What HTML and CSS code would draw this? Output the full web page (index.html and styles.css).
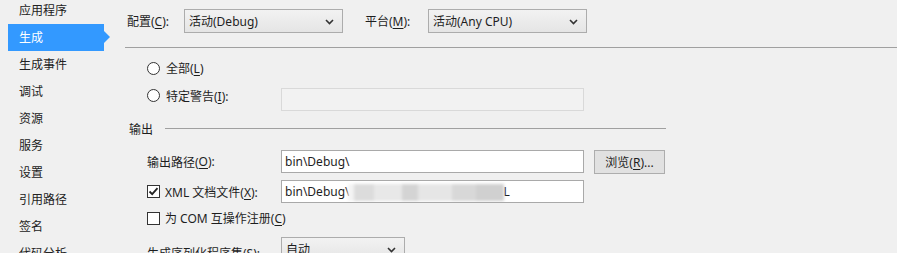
FILE: index.html
```html
<!DOCTYPE html>
<html lang="zh-CN">
<head>
    <meta charset="UTF-8">
    <title>项目属性 - 生成</title>
    <link rel="stylesheet" href="styles.css">
</head>
<body>
    <div class="page">
        <ul class="nav">
            <li>应用程序</li>
            <li class="active">生成</li>
            <li>生成事件</li>
            <li>调试</li>
            <li>资源</li>
            <li>服务</li>
            <li>设置</li>
            <li>引用路径</li>
            <li>签名</li>
            <li>代码分析</li>
        </ul>

        <div class="main">
            <div class="toolbar">
                <span class="tb-label">配置(<u>C</u>):</span>
                <div class="select select-wide">
                    <span>活动(Debug)</span>
                    <svg class="chev" width="9" height="6" viewBox="0 0 9 6"><path d="M1 1 L4.5 4.5 L8 1" fill="none" stroke="#333" stroke-width="1.6"/></svg>
                </div>
                <span class="tb-label tb-gap">平台(<u>M</u>):</span>
                <div class="select select-wide">
                    <span>活动(Any CPU)</span>
                    <svg class="chev" width="9" height="6" viewBox="0 0 9 6"><path d="M1 1 L4.5 4.5 L8 1" fill="none" stroke="#333" stroke-width="1.6"/></svg>
                </div>
            </div>
            <div class="separator"></div>

            <div class="form">
                <div class="row row-radio1">
                    <span class="radio"></span>
                    <span>全部(<u>L</u>)</span>
                </div>
                <div class="row row-radio2">
                    <div class="label label-radio">
                        <span class="radio"></span>
                        <span>特定警告(<u>I</u>):</span>
                    </div>
                    <div class="textbox disabled"></div>
                </div>
            </div>

            <div class="group-head">
                <span>输出</span>
                <div class="group-line"></div>
            </div>

            <div class="form">
                <div class="row row-path">
                    <div class="label">输出路径(<u>O</u>):</div>
                    <div class="textbox">bin\Debug\</div>
                    <button class="btn">浏览(<u>R</u>)...</button>
                </div>
                <div class="row row-xml">
                    <div class="label label-check">
                        <span class="check">
                            <svg width="11" height="11" viewBox="0 0 11 11"><path d="M1.5 5.5 L4.2 8.2 L9.5 2.2" fill="none" stroke="#222" stroke-width="1.8"/></svg>
                        </span>
                        <span>XML 文档文件(<u>X</u>):</span>
                    </div>
                    <div class="textbox">bin\Debug\<span class="redact"><i class="b1"></i><i class="b2"></i><i class="b3"></i><i class="b4"></i><i class="b5"></i><i class="b6"></i><i class="b7"></i></span><span class="tail">L</span></div>
                </div>
                <div class="row row-com">
                    <span class="check"></span>
                    <span>为 COM 互操作注册(<u>C</u>)</span>
                </div>
                <div class="row row-serial">
                    <div class="label">生成序列化程序集(<u>S</u>):</div>
                    <div class="select select-small">
                        <span>自动</span>
                        <svg class="chev" width="9" height="6" viewBox="0 0 9 6"><path d="M1 1 L4.5 4.5 L8 1" fill="none" stroke="#333" stroke-width="1.6"/></svg>
                    </div>
                </div>
            </div>
        </div>
    </div>
</body>
</html>
```

FILE: styles.css
```css
body {
    margin: 0;
    background: #f0f0f0;
    font-family: "Noto Sans", "Noto Sans CJK SC", sans-serif;
    font-size: 12px;
    color: #1e1e1e;
    overflow: hidden;
}
u {
    text-decoration: underline;
    text-underline-offset: 2px;
}
.page {
    display: flex;
    height: 253px;
}
.nav {
    list-style: none;
    margin: -3px 0 0 8px;
    padding: 0;
    width: 117px;
    flex-shrink: 0;
}
.nav li {
    height: 27px;
    line-height: 27px;
    padding-left: 11px;
    width: 85px;
    color: #222;
    position: relative;
}
.nav li.active {
    background: #3399ff;
    color: #fff;
}
.nav li.active::after {
    content: "";
    position: absolute;
    left: 96px;
    top: 7px;
    border-left: 6px solid #3399ff;
    border-top: 6px solid transparent;
    border-bottom: 6px solid transparent;
}
.main {
    flex: 1;
    padding-top: 9px;
}
.toolbar {
    display: flex;
    align-items: center;
    height: 24px;
}
.tb-label {
    margin-left: 2px;
    width: 57px;
}
.tb-gap {
    margin-left: 22px;
    width: 63px;
}
.select {
    display: flex;
    align-items: center;
    justify-content: space-between;
    box-sizing: border-box;
    height: 24px;
    padding: 0 8px 0 4px;
    border: 1px solid #acacac;
    background: linear-gradient(#f2f2f2, #e5e5e5);
}
.select-wide {
    width: 159px;
}
.select-small {
    width: 124px;
}
.chev {
    margin-top: 1px;
}
.separator {
    margin-top: 14px;
    border-top: 1px solid #a0a0a0;
}
.form {
    padding-left: 22px;
}
.row {
    display: flex;
    align-items: center;
}
.label {
    width: 134px;
    flex-shrink: 0;
    display: flex;
    align-items: center;
}
.radio {
    width: 11px;
    height: 11px;
    border: 1px solid #333;
    border-radius: 50%;
    background: #fff;
    margin-right: 6px;
    flex-shrink: 0;
}
.check {
    width: 11px;
    height: 11px;
    border: 1px solid #333;
    background: #fff;
    margin-right: 5px;
    display: flex;
    align-items: center;
    justify-content: center;
    flex-shrink: 0;
}
.row-radio1 {
    margin-top: 9px;
    height: 22px;
}
.row-radio2 {
    margin-top: 8px;
    height: 24px;
    align-items: flex-start;
}
.label-radio {
    height: 17px;
}
.textbox {
    box-sizing: border-box;
    width: 303px;
    height: 23px;
    line-height: 21px;
    padding-left: 3px;
    border: 1px solid #a9a9a9;
    background: #fff;
    white-space: nowrap;
    overflow: hidden;
}
.row-radio2 .textbox {
    margin-top: 1px;
}
.textbox.disabled {
    border-color: #d9d9d9;
    background: #f2f2f2;
}
.group-head {
    display: flex;
    align-items: center;
    width: 537px;
    height: 17px;
    margin-top: 9px;
    padding-left: 4px;
}
.group-line {
    flex: 1;
    margin-left: 12px;
    border-top: 1px solid #a0a0a0;
}
.row-path {
    margin-top: 12px;
    height: 25px;
}
.btn {
    margin-left: 10px;
    width: 71px;
    height: 24px;
    padding: 0;
    border: 1px solid #adadad;
    background: #e1e1e1;
    font: inherit;
    color: #1e1e1e;
}
.row-xml {
    margin-top: 6px;
    height: 23px;
}
.redact {
    display: inline-flex;
    vertical-align: middle;
    height: 17px;
    filter: blur(1.5px);
    margin-left: -2px;
}
.redact i {
    display: block;
    height: 17px;
}
.redact .b1 { width: 6px; background: #f4f4f4; }
.redact .b2 { width: 20px; background: #dcdcdc; }
.redact .b3 { width: 28px; background: #e8e8e8; }
.redact .b4 { width: 16px; background: #d4d4d4; }
.redact .b5 { width: 34px; background: #e6e6e6; }
.redact .b6 { width: 24px; background: #d8d8d8; }
.redact .b7 { width: 28px; background: #d0d0d0; }
.tail {
    margin-left: 0;
}
.row-com {
    margin-top: 5px;
    height: 20px;
}
.row-serial {
    margin-top: 9px;
    height: 24px;
    align-items: flex-start;
}
.row-serial .label {
    margin-top: 7px;
}
```
